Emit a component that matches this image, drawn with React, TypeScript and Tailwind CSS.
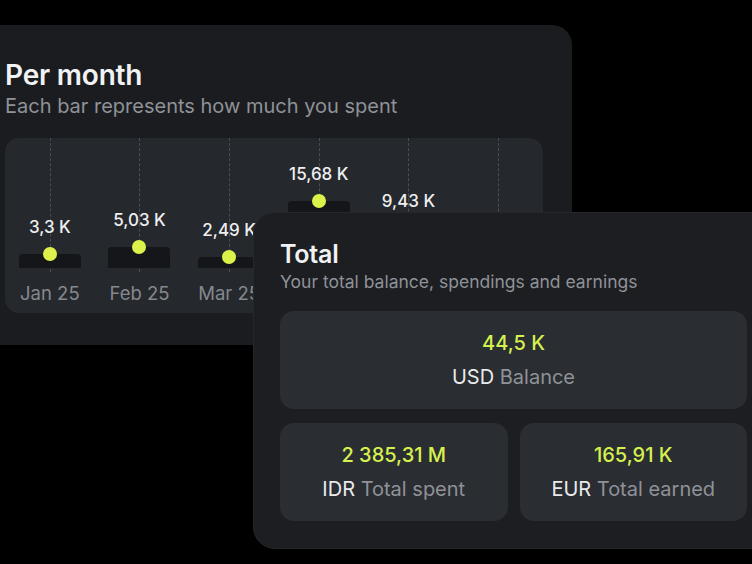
const months = [
  { label: "Jan 25", value: "3,3 K", k: 3.3 },
  { label: "Feb 25", value: "5,03 K", k: 5.03 },
  { label: "Mar 25", value: "2,49 K", k: 2.49 },
  { label: "", value: "15,68 K", k: 15.68 },
  { label: "", value: "9,43 K", k: 9.43 },
  { label: "", value: "", k: 0 },
];

function Tile({ amount, currency, label }: { amount: string; currency: string; label: string }) {
  return (
    <div className="flex h-[98px] flex-col items-center justify-center rounded-[14px] bg-[#2a2d32]">
      <span className="text-[20px] font-medium leading-[24px] text-[#d6f04f]">{amount}</span>
      <span className="mt-[10px] text-[20px] leading-[24px] text-[#8f9297]">
        <span className="text-[#e9eaec]">{currency}</span> {label}
      </span>
    </div>
  );
}

export default function App() {
  return (
    <div
      className="relative h-[564px] w-[752px] overflow-hidden bg-black"
      style={{ fontFamily: "Inter, 'Noto Sans', sans-serif" }}
    >
      {/* per month */}
      <div className="ml-[-20px] mt-[25px] w-[592px] rounded-[20px] bg-[#1a1c20] pb-[32px] pl-[25px] pr-[29px] pt-[33px]">
        <h1 className="text-[28px] font-semibold leading-[34px] tracking-[-0.2px] text-[#f1f2f3]">Per month</h1>
        <p className="mt-[2px] text-[20px] leading-[24px] text-[#8f9297]">Each bar represents how much you spent</p>

        <div className="mt-[20px] grid h-[175px] grid-cols-6 overflow-hidden rounded-[14px] bg-[#25282d]">
          {months.map((m, i) => (
            <div key={i} className="relative flex flex-col items-center">
              <div className="absolute left-1/2 top-0 h-[134px] border-l border-dashed border-[#4b4e54]" />
              <div className="relative flex flex-1 flex-col items-center justify-end">
                {m.value && (
                  <span className="mb-[17px] text-[17px] font-medium leading-[20px] text-[#eeeff1]">{m.value}</span>
                )}
                {m.k > 0 && (
                  <div
                    className="relative w-[62px] rounded-t-[4px] bg-[#151619]"
                    style={{ height: `${Math.round(m.k * 4.27)}px` }}
                  >
                    <div className="absolute left-1/2 top-[-7px] h-[14px] w-[14px] -translate-x-1/2 rounded-full bg-[#dcf24a]" />
                  </div>
                )}
              </div>
              <span className="relative mb-[8px] mt-[13px] h-[24px] text-[18.5px] leading-[24px] text-[#85888e]">{m.label}</span>
            </div>
          ))}
        </div>
      </div>

      {/* total */}
      <div className="absolute left-[253px] top-[212px] w-[521px] rounded-[22px] border border-[#25272b] bg-[#1c1e22] pb-[27px] pl-[26px] pr-[26px] pt-[25px]">
        <h2 className="text-[25px] font-semibold leading-[32px] tracking-[-0.2px] text-[#f1f2f3]">Total</h2>
        <p className="text-[17.5px] leading-[24px] text-[#8f9297]">Your total balance, spendings and earnings</p>
        <div className="mt-[17px] flex flex-col gap-[14px]">
          <Tile amount="44,5 K" currency="USD" label="Balance" />
          <div className="grid grid-cols-2 gap-[12px]">
            <Tile amount="2 385,31 M" currency="IDR" label="Total spent" />
            <Tile amount="165,91 K" currency="EUR" label="Total earned" />
          </div>
        </div>
      </div>
    </div>
  );
}
